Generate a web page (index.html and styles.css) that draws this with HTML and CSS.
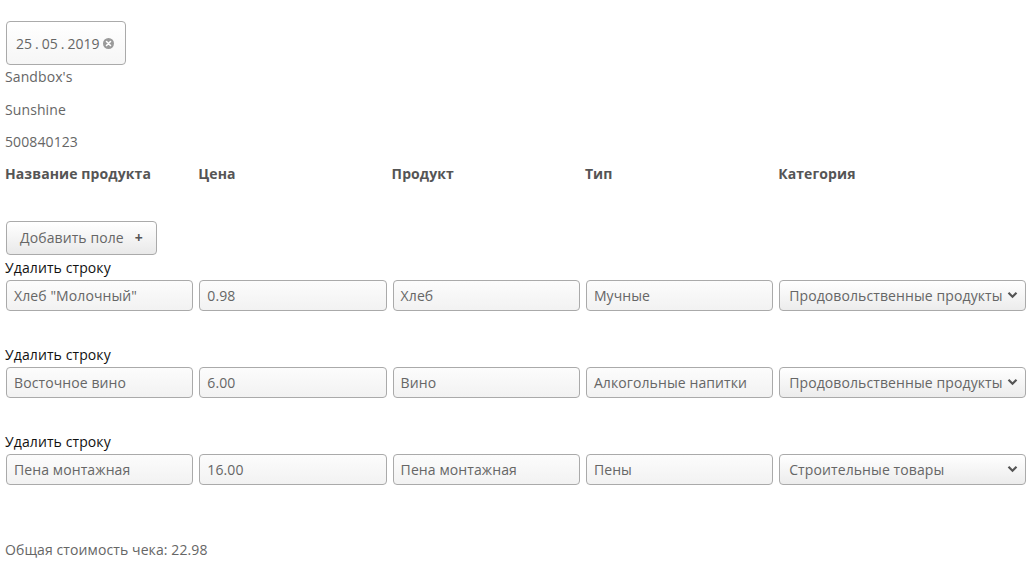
FILE: index.html
```html
<!DOCTYPE html>
<html lang="ru">
<head>
<meta charset="utf-8">
<link rel="stylesheet" href="styles.css">
</head>
<body>
<div class="page">
  <div class="date-box">
    <span class="date-text">25<span class="sep">.</span>05<span class="sep">.</span>2019</span>
    <span class="clear-icon"><svg width="11" height="11" viewBox="0 0 11 11"><circle cx="5.5" cy="5.5" r="5.5" fill="#9a9a9a"/><path d="M3.5 3.5 L7.5 7.5 M7.5 3.5 L3.5 7.5" stroke="#fff" stroke-width="1.6" stroke-linecap="round"/></svg></span>
  </div>
  <div class="info">Sandbox's</div>
  <div class="info">Sunshine</div>
  <div class="info">500840123</div>
  <div class="headers">
    <div class="hcol">Название продукта</div>
    <div class="hcol">Цена</div>
    <div class="hcol">Продукт</div>
    <div class="hcol">Тип</div>
    <div class="hcol">Категория</div>
  </div>
  <button class="add-btn">Добавить поле <span class="plus">+</span></button>

  <div class="item">
    <div class="del">Удалить строку</div>
    <div class="fields">
      <div class="field">Хлеб "Молочный"</div>
      <div class="field">0.98</div>
      <div class="field">Хлеб</div>
      <div class="field">Мучные</div>
      <div class="select"><span>Продовольственные продукты</span><svg class="chev" width="11" height="8" viewBox="0 0 11 8"><path d="M1.5 1.8 L5.5 5.8 L9.5 1.8" fill="none" stroke="#555" stroke-width="2.2"/></svg></div>
    </div>
  </div>

  <div class="item">
    <div class="del">Удалить строку</div>
    <div class="fields">
      <div class="field">Восточное вино</div>
      <div class="field">6.00</div>
      <div class="field">Вино</div>
      <div class="field">Алкогольные напитки</div>
      <div class="select"><span>Продовольственные продукты</span><svg class="chev" width="11" height="8" viewBox="0 0 11 8"><path d="M1.5 1.8 L5.5 5.8 L9.5 1.8" fill="none" stroke="#555" stroke-width="2.2"/></svg></div>
    </div>
  </div>

  <div class="item">
    <div class="del">Удалить строку</div>
    <div class="fields">
      <div class="field">Пена монтажная</div>
      <div class="field">16.00</div>
      <div class="field">Пена монтажная</div>
      <div class="field">Пены</div>
      <div class="select"><span>Строительные товары</span><svg class="chev" width="11" height="8" viewBox="0 0 11 8"><path d="M1.5 1.8 L5.5 5.8 L9.5 1.8" fill="none" stroke="#555" stroke-width="2.2"/></svg></div>
    </div>
  </div>

  <div class="total">Общая стоимость чека: 22.98</div>
</div>
</body>
</html>
```

FILE: styles.css
```css
html, body {
  margin: 0;
  padding: 0;
  background: #fff;
}
body {
  font-family: "Open Sans", "Noto Sans", sans-serif;
  font-size: 14px;
  color: #666;
  letter-spacing: 0.1px;
}
.page {
  padding: 21px 5px 0 5px;
}
.date-box {
  box-sizing: border-box;
  width: 120px;
  height: 44px;
  margin-left: 1px;
  border: 1px solid #aaa;
  border-radius: 4px;
  background: linear-gradient(#fff, #f6f6f6);
  display: flex;
  align-items: center;
  padding-left: 9px;
  gap: 4px;
  margin-bottom: 2px;
}
.date-text {
  color: #666;
  letter-spacing: 0;
}
.sep {
  margin: 0 3px;
}
.clear-icon {
  display: flex;
  align-items: center;
}
.info {
  line-height: 20px;
  height: 20px;
  margin-bottom: 12.5px;
}
.headers {
  display: flex;
  line-height: 20px;
  height: 20px;
  margin-top: -1px;
}
.hcol {
  width: 193.3px;
  font-weight: bold;
  color: #555;
  flex: none;
}
.add-btn {
  margin-top: 37px;
  margin-left: 1px;
  box-sizing: border-box;
  width: 151px;
  height: 34px;
  border: 1px solid #aaa;
  border-radius: 4px;
  background: linear-gradient(#fff, #e9e9e9);
  font-family: "Open Sans", "Noto Sans", sans-serif;
  font-size: 14px;
  letter-spacing: 0.1px;
  color: #666;
  padding: 0 0 0 13px;
  text-align: left;
  display: flex;
  align-items: center;
}
.plus {
  font-weight: bold;
  margin-left: 11px;
  color: #555;
}
.item {
  margin-top: 3px;
  margin-bottom: 34px;
}
.del {
  color: #111;
  line-height: 20px;
  height: 20px;
  margin-bottom: 2px;
}
.fields {
  display: flex;
  gap: 6px;
  padding-left: 1px;
}
.field, .select {
  box-sizing: border-box;
  height: 31px;
  border: 1px solid #aaa;
  border-radius: 4px;
  display: flex;
  align-items: center;
  flex: none;
  white-space: nowrap;
  overflow: hidden;
}
.field {
  width: 187.3px;
  padding-left: 7px;
  background: linear-gradient(#fcfcfc, #f2f2f2);
}
.select {
  width: 247px;
  padding: 0 7px 0 9px;
  justify-content: space-between;
  background: linear-gradient(#fff, #ececec);
  color: #666;
}
.chev {
  flex: none;
}
.total {
  margin-top: 55px;
  line-height: 20px;
}
```
